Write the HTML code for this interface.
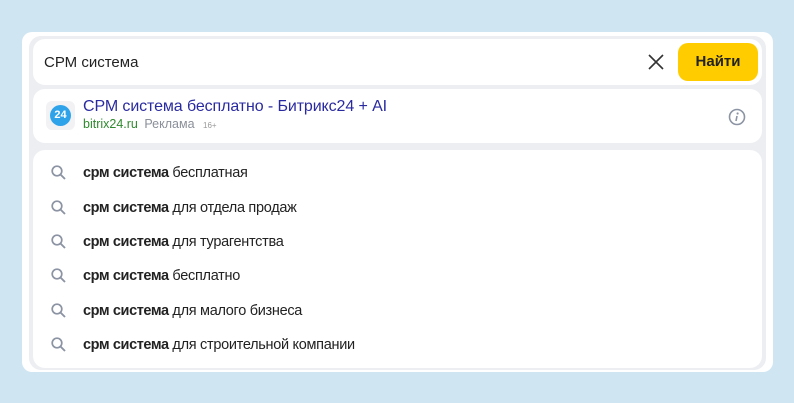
<!DOCTYPE html>
<html><head><meta charset="utf-8"><style>
*{margin:0;padding:0;box-sizing:border-box}
body{width:794px;height:403px;background:#cfe5f2;font-family:"Liberation Sans",sans-serif;position:relative;overflow:hidden}
.card{position:absolute;left:22px;top:32px;width:751px;height:340px;background:#fff;border-radius:10px}
.panel{position:absolute;left:29px;top:36px;width:737px;height:334px;background:#eceef2;border-radius:12px}
.box{position:absolute;left:33px;width:729px;background:#fff;border-radius:12px}
.q{position:absolute;left:44px;top:54px;font-size:15px;color:#222}
.btn{position:absolute;left:678px;top:43px;width:80px;height:38px;background:#fc0;border-radius:10px;font-size:15px;font-weight:bold;color:#222;text-align:center;line-height:38px}
.fav{position:absolute;left:46px;top:101px;width:29px;height:29px;background:#f2f2f4;border-radius:6px}
.fav div{position:absolute;left:4px;top:4px;width:21px;height:21px;border-radius:50%;background:#2fa3ea;color:#fff;font-size:11px;font-weight:bold;text-align:center;line-height:21px}
.t{position:absolute;left:83px;top:98px;font-size:16px;color:#2a2aa0;white-space:nowrap;letter-spacing:-0.1px}
.u{position:absolute;left:83px;top:117px;font-size:12.5px;white-space:nowrap}
.row{position:absolute;left:83px;font-size:14.5px;color:#222;white-space:nowrap;letter-spacing:-0.3px}
.row b{letter-spacing:-0.4px}
.ic{position:absolute;left:51px}
</style></head><body>
<div class="card"></div>
<div class="panel"></div>
<div class="box" style="top:39px;height:46px"></div>
<div class="q">СРМ система</div>
<svg style="position:absolute;left:648px;top:54px" width="16" height="16"><path d="M1 1L15 15M15 1L1 15" stroke="#333" stroke-width="1.6"/></svg>
<div class="btn">Найти</div>
<div class="box" style="top:89px;height:54px"></div>
<div class="fav"><div>24</div></div>
<div class="t">СРМ система бесплатно - Битрикс24 + AI</div>
<div class="u"><span style="color:#2f8a2f">bitrix24.ru</span> <span style="color:#8a8f99;margin-left:3px">Реклама</span> <span style="color:#999;font-size:8px;margin-left:5px">16+</span></div>
<svg style="position:absolute;left:728px;top:108px" width="18" height="18"><circle cx="9" cy="9" r="7.5" fill="none" stroke="#8c94a3" stroke-width="1.6"/><circle cx="9.6" cy="5.5" r="1.1" fill="#8c94a3"/><path d="M9 8L8 13" stroke="#8c94a3" stroke-width="1.6"/></svg>
<div class="box" style="top:150px;height:218px"></div>
<svg class="ic" style="top:165px" width="15" height="15"><circle cx="6" cy="6" r="4.8" fill="none" stroke="#8c94a3" stroke-width="1.7"/><path d="M9.5 9.5L14 14" stroke="#8c94a3" stroke-width="1.9"/></svg>
<div class="row" style="top:165px"><b>срм система</b> бесплатная</div>
<svg class="ic" style="top:200px" width="15" height="15"><circle cx="6" cy="6" r="4.8" fill="none" stroke="#8c94a3" stroke-width="1.7"/><path d="M9.5 9.5L14 14" stroke="#8c94a3" stroke-width="1.9"/></svg>
<div class="row" style="top:200px"><b>срм система</b> для отдела продаж</div>
<svg class="ic" style="top:234px" width="15" height="15"><circle cx="6" cy="6" r="4.8" fill="none" stroke="#8c94a3" stroke-width="1.7"/><path d="M9.5 9.5L14 14" stroke="#8c94a3" stroke-width="1.9"/></svg>
<div class="row" style="top:234px"><b>срм система</b> для турагентства</div>
<svg class="ic" style="top:268px" width="15" height="15"><circle cx="6" cy="6" r="4.8" fill="none" stroke="#8c94a3" stroke-width="1.7"/><path d="M9.5 9.5L14 14" stroke="#8c94a3" stroke-width="1.9"/></svg>
<div class="row" style="top:268px"><b>срм система</b> бесплатно</div>
<svg class="ic" style="top:303px" width="15" height="15"><circle cx="6" cy="6" r="4.8" fill="none" stroke="#8c94a3" stroke-width="1.7"/><path d="M9.5 9.5L14 14" stroke="#8c94a3" stroke-width="1.9"/></svg>
<div class="row" style="top:303px"><b>срм система</b> для малого бизнеса</div>
<svg class="ic" style="top:337px" width="15" height="15"><circle cx="6" cy="6" r="4.8" fill="none" stroke="#8c94a3" stroke-width="1.7"/><path d="M9.5 9.5L14 14" stroke="#8c94a3" stroke-width="1.9"/></svg>
<div class="row" style="top:337px"><b>срм система</b> для строительной компании</div>
</body></html>
